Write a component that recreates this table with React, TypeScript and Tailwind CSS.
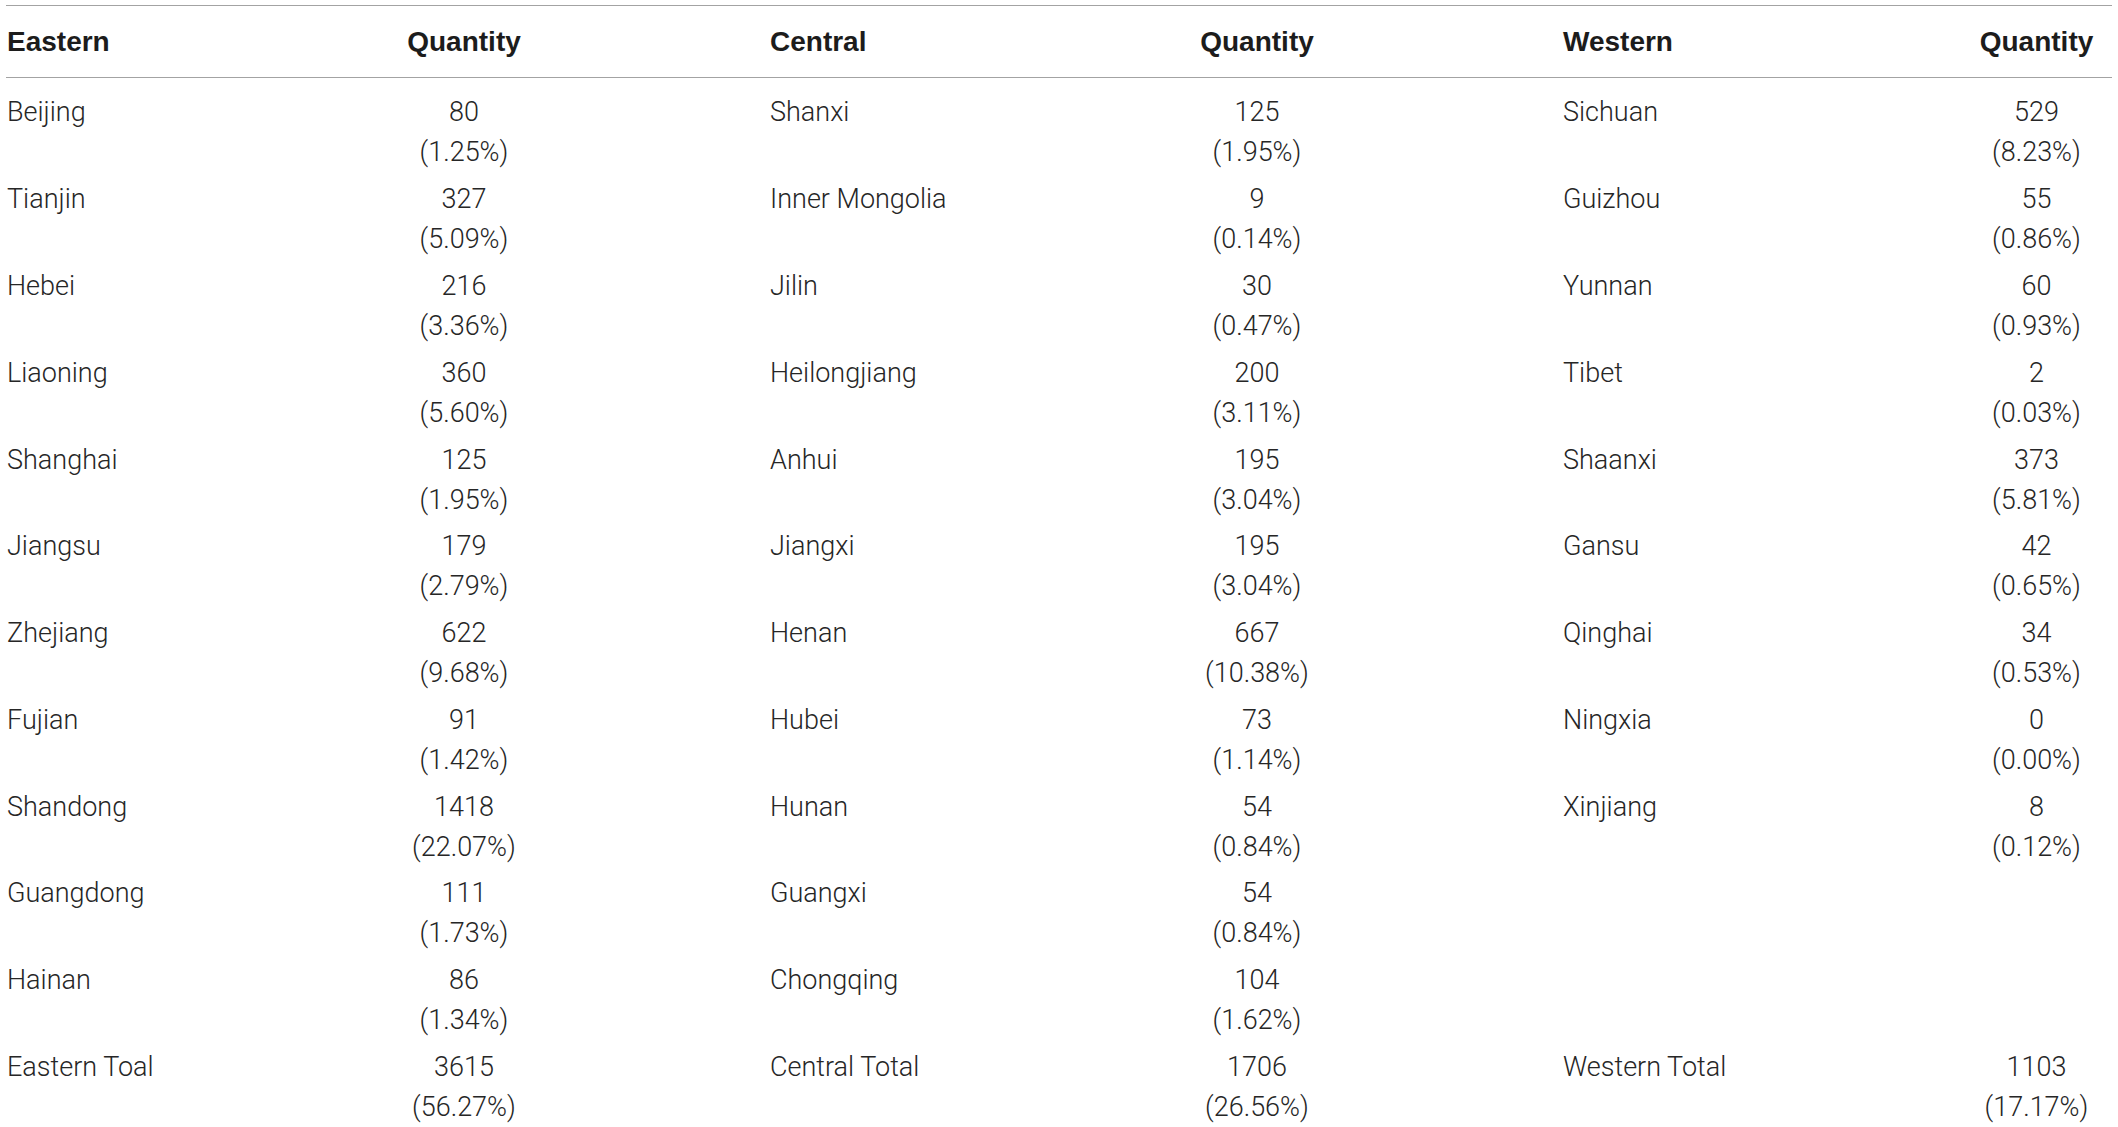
type Row = [string, string, string] | null;

const eastern: [string, number, string][] = [
  ["Beijing", 80, "1.25%"],
  ["Tianjin", 327, "5.09%"],
  ["Hebei", 216, "3.36%"],
  ["Liaoning", 360, "5.60%"],
  ["Shanghai", 125, "1.95%"],
  ["Jiangsu", 179, "2.79%"],
  ["Zhejiang", 622, "9.68%"],
  ["Fujian", 91, "1.42%"],
  ["Shandong", 1418, "22.07%"],
  ["Guangdong", 111, "1.73%"],
  ["Hainan", 86, "1.34%"],
  ["Eastern Toal", 3615, "56.27%"],
];

const central: [string, number, string][] = [
  ["Shanxi", 125, "1.95%"],
  ["Inner Mongolia", 9, "0.14%"],
  ["Jilin", 30, "0.47%"],
  ["Heilongjiang", 200, "3.11%"],
  ["Anhui", 195, "3.04%"],
  ["Jiangxi", 195, "3.04%"],
  ["Henan", 667, "10.38%"],
  ["Hubei", 73, "1.14%"],
  ["Hunan", 54, "0.84%"],
  ["Guangxi", 54, "0.84%"],
  ["Chongqing", 104, "1.62%"],
  ["Central Total", 1706, "26.56%"],
];

const western: ([string, number, string] | null)[] = [
  ["Sichuan", 529, "8.23%"],
  ["Guizhou", 55, "0.86%"],
  ["Yunnan", 60, "0.93%"],
  ["Tibet", 2, "0.03%"],
  ["Shaanxi", 373, "5.81%"],
  ["Gansu", 42, "0.65%"],
  ["Qinghai", 34, "0.53%"],
  ["Ningxia", 0, "0.00%"],
  ["Xinjiang", 8, "0.12%"],
  null,
  null,
  ["Western Total", 1103, "17.17%"],
];

const cols = "grid grid-cols-[159px_598px_195px_598px_405px_151px]";

function NameCell({ text, first }: { text?: string; first?: boolean }) {
  return (
    <div className={first ? "pl-[1px]" : "pl-[7px]"}>
      <div className="leading-[40px]">{text ?? ""}</div>
    </div>
  );
}

function QtyCell({ value, pct }: { value?: number; pct?: string }) {
  return (
    <div className="text-center">
      {value !== undefined && (
        <>
          <div className="leading-[40px]">{value}</div>
          <div className="leading-[40px]">({pct})</div>
        </>
      )}
    </div>
  );
}

export default function App() {
  return (
    <div className="min-h-screen bg-white">
      <div className="ml-[6px] mt-[5px] w-[2106px] border-t border-[#a3a3a3]">
        {/* header */}
        <div
          className={`${cols} h-[72px] border-b border-[#a3a3a3] pt-[16px] font-bold text-[28px] text-[#1c1c1c] font-['Liberation_Sans',Arial,sans-serif]`}
        >
          <NameCell text="Eastern" first />
          <div className="text-center leading-[40px]">Quantity</div>
          <NameCell text="Central" />
          <div className="text-center leading-[40px]">Quantity</div>
          <NameCell text="Western" />
          <div className="text-center leading-[40px]">Quantity</div>
        </div>

        {/* body */}
        <div className="pt-[11px] text-[27px] font-light text-[#262626] font-['Roboto','Liberation_Sans',sans-serif]">
          {eastern.map((e, i) => {
            const c = central[i];
            const w = western[i];
            return (
              <div key={i} className={`${cols} py-[3.4px]`}>
                <NameCell text={e[0]} first />
                <QtyCell value={e[1]} pct={e[2]} />
                <NameCell text={c[0]} />
                <QtyCell value={c[1]} pct={c[2]} />
                <NameCell text={w ? w[0] : ""} />
                <QtyCell value={w ? w[1] : undefined} pct={w ? w[2] : undefined} />
              </div>
            );
          })}
        </div>
      </div>
    </div>
  );
}
